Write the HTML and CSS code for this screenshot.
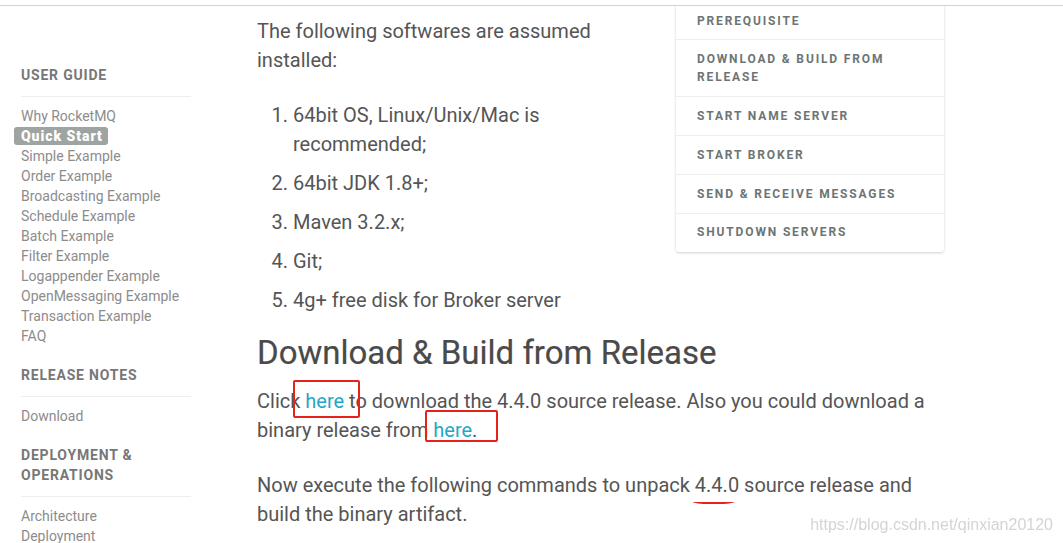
FILE: index.html
```html
<!DOCTYPE html>
<html>
<head>
<meta charset="utf-8">
<link rel="stylesheet" href="styles.css">
</head>
<body>
<div class="topbar"></div>
<div class="page">
  <aside class="sidebar">
    <section class="nav-section">
      <h3 class="nav-title">USER GUIDE</h3>
      <ul class="nav-list">
        <li>Why RocketMQ</li>
        <li><span class="active">Quick Start</span></li>
        <li>Simple Example</li>
        <li>Order Example</li>
        <li>Broadcasting Example</li>
        <li>Schedule Example</li>
        <li>Batch Example</li>
        <li>Filter Example</li>
        <li>Logappender Example</li>
        <li>OpenMessaging Example</li>
        <li>Transaction Example</li>
        <li>FAQ</li>
      </ul>
    </section>
    <section class="nav-section">
      <h3 class="nav-title">RELEASE NOTES</h3>
      <ul class="nav-list">
        <li>Download</li>
      </ul>
    </section>
    <section class="nav-section">
      <h3 class="nav-title">DEPLOYMENT &amp;<br>OPERATIONS</h3>
      <ul class="nav-list">
        <li>Architecture</li>
        <li>Deployment</li>
      </ul>
    </section>
  </aside>
  <main class="content">
    <nav class="toc">
      <div class="toc-item">PREREQUISITE</div>
      <div class="toc-item">DOWNLOAD &amp; BUILD FROM<br>RELEASE</div>
      <div class="toc-item">START NAME SERVER</div>
      <div class="toc-item">START BROKER</div>
      <div class="toc-item">SEND &amp; RECEIVE MESSAGES</div>
      <div class="toc-item last">SHUTDOWN SERVERS</div>
    </nav>
    <p class="first">The following softwares are assumed installed:</p>
    <ol class="req">
      <li>64bit OS, Linux/Unix/Mac is recommended;</li>
      <li>64bit JDK 1.8+;</li>
      <li>Maven 3.2.x;</li>
      <li>Git;</li>
      <li>4g+ free disk for Broker server</li>
    </ol>
    <h2 class="section-title">Download &amp; Build from Release</h2>
    <p>Click <a class="link mark1">here</a> to download the 4.4.0 source release. Also you could download a binary release from <a class="link mark2">here</a>.</p>
    <p>Now execute the following commands to unpack <span class="squiggle">4.4.0</span> source release and build the binary artifact.</p>
  </main>
</div>
<div class="watermark">https://blog.csdn.net/qinxian20120</div>
</body>
</html>
```
FILE: styles.css
```css
html, body {
  margin: 0;
  padding: 0;
  background: #fff;
  overflow: hidden;
}
body {
  font-family: Roboto, "Noto Sans", sans-serif;
  width: 1063px;
  height: 543px;
}
.topbar {
  position: fixed;
  top: 0;
  left: 0;
  right: 0;
  height: 5px;
  background: #fff;
  border-bottom: 1px solid #d2d2d2;
  z-index: 5;
}
.page {
  display: flex;
  align-items: flex-start;
}
.sidebar {
  width: 170px;
  margin-left: 21px;
  padding-top: 65px;
  flex: none;
}
.nav-section {
  margin-bottom: 19px;
}
.nav-title {
  margin: 0;
  font-size: 14px;
  line-height: 20px;
  font-weight: 700;
  color: #777;
  letter-spacing: 0.8px;
  padding-bottom: 11px;
  border-bottom: 1px solid #eee;
}
.nav-list {
  list-style: none;
  margin: 0;
  padding: 9px 0 0 0;
}
.nav-list li {
  font-size: 14px;
  line-height: 20px;
  color: #8c8c8c;
}
.active {
  display: inline-block;
  margin-left: -7px;
  padding: 0 5px 0 7px;
  line-height: 18px;
  background: #9ea4a2;
  color: #fff;
  font-weight: 900;
  letter-spacing: 0.95px;
  border-radius: 3px;
}
.content {
  margin-left: 66px;
  width: 687px;
  padding-top: 1px;
  flex: none;
  color: #555;
  font-size: 20px;
  line-height: 29px;
}
.toc {
  float: right;
  width: 268px;
  margin-left: 12px;
  background: #fff;
  border-radius: 3px;
  box-shadow: 0 1px 3px rgba(0,0,0,0.18);
}
.toc-item {
  padding: 10px 21px 10px 21px;
  font-size: 12px;
  line-height: 18px;
  font-weight: 700;
  letter-spacing: 1.85px;
  color: #6d7574;
  border-bottom: 1px solid #eee;
}
.toc-item:first-child {
  padding-top: 11px;
  padding-bottom: 9px;
}
.toc-item.last {
  border-bottom: none;
  padding-top: 9px;
  padding-bottom: 11px;
}
.content p {
  margin: 0 0 26px 0;
}
.content p.first {
  margin-top: 16px;
}
.req {
  margin: 25px 0 0 0;
  padding-left: 36px;
}
.req li {
  margin-bottom: 10px;
}
.section-title {
  margin: 18px 0 14px 0;
  font-size: 33px;
  line-height: 40px;
  font-weight: 400;
  color: #4a4a4a;
  -webkit-text-stroke: 0.2px #4a4a4a;
}
.link {
  color: #1ea8c3;
  text-decoration: none;
  position: relative;
}
.mark1::after,
.mark2::after {
  content: "";
  position: absolute;
  border: 2px solid #e5231d;
  border-radius: 2px;
}
.mark1::after {
  left: -12px;
  right: -16px;
  top: -9px;
  bottom: -5px;
}
.mark2::after {
  left: -8px;
  right: -26px;
  top: -8px;
  bottom: 0;
}
.squiggle {
  position: relative;
}
.squiggle::after {
  content: "";
  position: absolute;
  left: -2px;
  right: 5px;
  bottom: -7px;
  height: 3px;
  border-bottom: 2px solid #e5231d;
  border-radius: 0 0 40% 40%;
}
.watermark {
  position: fixed;
  right: 10px;
  bottom: 9px;
  font-family: "Liberation Sans", Arial, sans-serif;
  font-size: 16px;
  color: #d4d4d4;
}
```
